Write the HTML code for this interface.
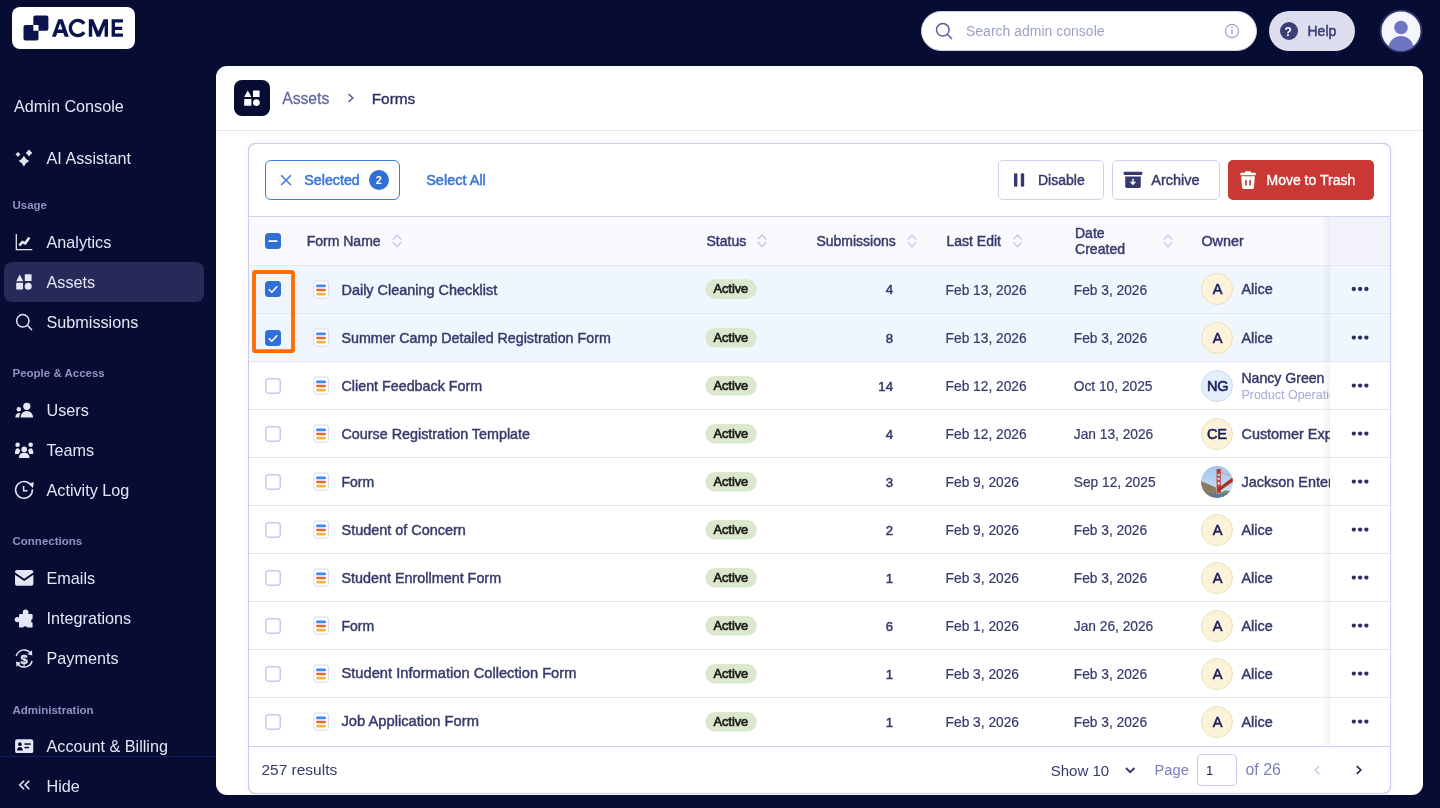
<!DOCTYPE html>
<html><head><meta charset="utf-8">
<style>
*{box-sizing:border-box;margin:0;padding:0}
html,body{width:1440px;height:808px;overflow:hidden;background:#060c32;font-family:"Liberation Sans",sans-serif}
.t{position:absolute;line-height:1;white-space:nowrap}
.a{position:absolute}
svg{position:absolute;overflow:visible}
</style></head><body><div id="root" style="position:absolute;left:0;top:0;width:1440px;height:808px;will-change:transform;background:#060c32">
<div class="a" style="left:12px;top:7px;width:123px;height:42px;background:#fff;border-radius:8px"></div><svg style="left:0;top:0" width="150" height="60">
<path d="M25.5 25h13v13.5a2 2 0 0 1-2 2h-11a2 2 0 0 1-2-2v-11.5a2 2 0 0 1 2-2z" fill="#0c1450"/>
<path d="M35.3 15.6h11.1a2 2 0 0 1 2 2v11.1a2 2 0 0 1-2 2h-13.1v-13.1a2 2 0 0 1 2-2z" fill="#0c1450"/>
<rect x="33.3" y="25" width="5.2" height="5.7" fill="#fff"/>
</svg><svg style="left:0;top:0" width="150" height="60" fill="#0c1450">
<path fill-rule="evenodd" d="M51.9 36.8 L58.3 19.3 H62.7 L68.8 36.8 H64.7 L63.4 32.9 H57.3 L55.9 36.8Z M57.9 29.6 H62.5 L60.2 23.2Z"/>
<path d="M84.1 23.7 A7.55 7.55 0 1 0 84.1 32.3" fill="none" stroke="#0c1450" stroke-width="3.3"/>
<path d="M88.8 36.8 V19.3 H93.2 L98.4 31.3 L103.6 19.3 H108 V36.8 H104.6 V25.6 L100.2 36.8 H96.6 L92.2 25.6 V36.8Z"/>
<path d="M111.6 19.3 H123 V22.5 H115 V26.7 H122.2 V29.9 H115 V33.6 H123 V36.8 H111.6Z"/>
</svg><div class="t" style="left:14px;top:98.29px;font-size:16.2px;font-weight:400;color:#e4e6f5;">Admin Console</div>
<div class="a" style="left:4px;top:262px;width:200px;height:40px;background:#272a58;border-radius:8px"></div><div class="t" style="left:12.5px;top:200.27px;font-size:11.5px;font-weight:700;color:#8e92c2;">Usage</div>
<div class="t" style="left:12.5px;top:368.47px;font-size:11.5px;font-weight:700;color:#8e92c2;">People &amp; Access</div>
<div class="t" style="left:12.5px;top:536.47px;font-size:11.5px;font-weight:700;color:#8e92c2;">Connections</div>
<div class="t" style="left:12.5px;top:704.57px;font-size:11.5px;font-weight:700;color:#8e92c2;">Administration</div>
<div class="t" style="left:46.5px;top:150.29px;font-size:16.2px;font-weight:400;color:#e4e6f5;">AI Assistant</div>
<div class="t" style="left:46.5px;top:234.29px;font-size:16.2px;font-weight:400;color:#e4e6f5;">Analytics</div>
<div class="t" style="left:46.5px;top:274.29px;font-size:16.2px;font-weight:400;color:#e4e6f5;">Assets</div>
<div class="t" style="left:46.5px;top:314.29px;font-size:16.2px;font-weight:400;color:#e4e6f5;">Submissions</div>
<div class="t" style="left:46.5px;top:402.29px;font-size:16.2px;font-weight:400;color:#e4e6f5;">Users</div>
<div class="t" style="left:46.5px;top:442.29px;font-size:16.2px;font-weight:400;color:#e4e6f5;">Teams</div>
<div class="t" style="left:46.5px;top:482.29px;font-size:16.2px;font-weight:400;color:#e4e6f5;">Activity Log</div>
<div class="t" style="left:46.5px;top:570.29px;font-size:16.2px;font-weight:400;color:#e4e6f5;">Emails</div>
<div class="t" style="left:46.5px;top:610.29px;font-size:16.2px;font-weight:400;color:#e4e6f5;">Integrations</div>
<div class="t" style="left:46.5px;top:650.29px;font-size:16.2px;font-weight:400;color:#e4e6f5;">Payments</div>
<div class="t" style="left:46.5px;top:738.29px;font-size:16.2px;font-weight:400;color:#e4e6f5;">Account &amp; Billing</div>
<svg style="left:0;top:0" width="216" height="808" fill="#e4e6f5" stroke="none">
<!-- sparkles -->
<path d="M23.9 155.79999999999998 Q25.49 159.51 29.2 161.1 Q25.49 162.69 23.9 166.4 Q22.31 162.69 18.599999999999998 161.1 Q22.31 159.51 23.9 155.79999999999998Z"/><path d="M29.0 149.6 Q30.428 151.572 32.4 153.0 Q30.428 154.428 29.0 156.4 Q27.572 154.428 25.6 153.0 Q27.572 151.572 29.0 149.6Z"/><path d="M18.0 151.70000000000002 Q18.988 153.312 20.6 154.3 Q18.988 155.288 18.0 156.9 Q17.012 155.288 15.4 154.3 Q17.012 153.312 18.0 151.70000000000002Z"/>
<!-- analytics -->
<g fill="none" stroke="#e4e6f5" stroke-width="1.3"><path d="M16.3 234v15.7h16"/></g>
<path d="M19.3 245.5 L22.5 242 L25.3 243.3 L29.3 237.5" fill="none" stroke="#e4e6f5" stroke-width="2.6" stroke-linecap="butt"/>
<!-- assets -->
<path d="M16.2 281.3 L19.8 274.6 L23.3 281.3Z"/>
<rect x="24.8" y="274.2" width="6.8" height="6.8" rx="0.6"/>
<rect x="16.2" y="282.8" width="6.8" height="6.8" rx="0.6"/>
<circle cx="28.2" cy="286.2" r="3.5"/>
<!-- search -->
<g fill="none" stroke="#e4e6f5" stroke-width="1.5"><circle cx="22.8" cy="320.8" r="6.2"/><path d="M27.3 325.3 L32 330"/></g>
<!-- users -->
<circle cx="26.8" cy="406.3" r="3.6"/>
<path d="M20.6 417.6 Q21 411 26.8 411 Q32.6 411 33 417.6Z"/>
<circle cx="18.8" cy="409.3" r="2.2"/>
<path d="M15.3 417.6 Q15.6 413.5 18.5 413 Q19.8 413 20.4 413.6 Q19.4 415 19.2 417.6Z"/>
<!-- teams -->
<circle cx="17.6" cy="444.7" r="2.3"/><circle cx="30.7" cy="444.7" r="2.3"/>
<circle cx="24.2" cy="449.4" r="2.8"/>
<path d="M14.9 454 Q15 448.3 17.6 448.3 Q19.8 448.3 20.3 450.8 Q19.2 452 19.1 454Z"/>
<path d="M33.4 454 Q33.3 448.3 30.7 448.3 Q28.5 448.3 28 450.8 Q29.1 452 29.2 454Z"/>
<path d="M18.8 458 Q19 452.8 24.2 452.8 Q29.4 452.8 29.6 458Z"/>
<!-- clock -->
<g fill="none" stroke="#e4e6f5" stroke-width="1.5"><path d="M32.4 489.3 A8.4 8.4 0 1 1 29.6 483.6"/><path d="M23.6 486 v4.8 h3.9"/></g>
<path d="M28.2 483.6 L33.9 482.2 L32.9 487.9Z"/>
<!-- mail -->
<path d="M15 572 Q15 570 17 570 H31.4 Q33.4 570 33.4 572 V572.6 L24.2 578.7 L15 572.6Z"/>
<path d="M15 574.8 L24.2 580.9 L33.4 574.8 V583.8 Q33.4 585.8 31.4 585.8 H17 Q15 585.8 15 583.8Z"/>
<!-- puzzle -->
<rect x="19" y="614" width="13.6" height="13.6" rx="1.2"/>
<circle cx="25.6" cy="612.4" r="2.9"/>
<circle cx="17.3" cy="619.6" r="2.6"/>
<circle cx="33.2" cy="621" r="2.1" fill="#060c32"/>
<circle cx="25.2" cy="628.4" r="2.1" fill="#060c32"/>
<!-- payments -->
<g fill="none" stroke="#e4e6f5" stroke-width="1.5"><path d="M16.3 656 A8.2 8.2 0 0 1 30.6 653"/><path d="M32.1 661 A8.2 8.2 0 0 1 17.8 664"/></g>
<path d="M31.9 650.3 L32.3 655.5 L27.5 654.3Z"/><path d="M16.5 666.7 L16.1 661.5 L20.9 662.7Z"/>
<text x="24.1" y="663.6" font-family="Liberation Sans" font-weight="700" font-size="13" text-anchor="middle" stroke="#e4e6f5" stroke-width="0.3">$</text>
<!-- card -->
<rect x="15.1" y="739.2" width="18.2" height="13.9" rx="2.2"/>
<circle cx="19.9" cy="744.2" r="1.9" fill="#060c32"/>
<path d="M17 750.6 Q17.2 747 19.9 747 Q22.6 747 22.8 750.6Z" fill="#060c32"/>
<rect x="24.5" y="743.3" width="6.3" height="1.5" fill="#060c32"/>
<rect x="24.5" y="746.8" width="4.5" height="1.5" fill="#060c32"/>
<!-- divider -->
<rect x="0" y="756" width="216" height="1" fill="#151b5c"/>
<!-- hide chevrons -->
<g fill="none" stroke="#e4e6f5" stroke-width="1.6"><path d="M24 780.8 L19.8 785 L24 789.2"/><path d="M29.3 780.8 L25.1 785 L29.3 789.2"/></g>
</svg><div class="t" style="left:46.5px;top:777.59px;font-size:16.2px;font-weight:400;color:#e4e6f5;">Hide</div>
<div class="a" style="left:921px;top:11px;width:336px;height:40px;background:#fff;border-radius:20px;border:1px solid #c9cdee"></div><svg style="left:0;top:0" width="1440" height="60">
<g fill="none" stroke="#5a609a" stroke-width="1.5"><circle cx="942.8" cy="29.8" r="6.3"/><path d="M947.3 34.3 L952 39"/></g>
<g fill="none" stroke="#9ca1c9" stroke-width="1.2"><circle cx="1232" cy="31" r="6.6"/></g>
<rect x="1231.3" y="29.5" width="1.4" height="4.6" fill="#9ca1c9"/><circle cx="1232" cy="27.4" r="0.85" fill="#9ca1c9"/>
</svg><div class="t" style="left:966px;top:24.05px;font-size:14px;font-weight:400;color:#9ca1c9;">Search admin console</div>
<div class="a" style="left:1269px;top:11px;width:86px;height:40px;background:#dcdef0;border-radius:20px"></div><svg style="left:0;top:0" width="1440" height="60"><circle cx="1289" cy="31" r="9" fill="#3b3f73"/></svg><div class="t" style="left:1284.6px;top:25.84px;font-size:12px;font-weight:700;color:#fff;">?</div>
<div class="t" style="left:1307.5px;top:23.65px;font-size:14px;font-weight:400;color:#3b3f73;-webkit-text-stroke:0.5px #3b3f73;">Help</div>
<svg style="left:0;top:0" width="1440" height="60">
<defs><clipPath id="av"><circle cx="1401" cy="31" r="20"/></clipPath></defs>
<circle cx="1401" cy="31" r="20.5" fill="#f4f6fe" stroke="#2e3266" stroke-width="2"/>
<g clip-path="url(#av)" fill="#6e75c4"><circle cx="1401" cy="27.5" r="6.8"/><ellipse cx="1401" cy="48" rx="12.3" ry="12"/></g>
</svg><div class="a" style="left:216px;top:66px;width:1207px;height:729px;background:#fff;border-radius:11px;overflow:hidden"></div><div class="a" style="left:216px;top:130px;width:1207px;height:1px;background:#e4e6f5"></div><div class="a" style="left:234px;top:80px;width:36px;height:36px;background:#060c32;border-radius:8px"></div><svg style="left:0;top:0" width="1440" height="140" fill="#fff">
<path d="M244.1 97 L247.8 90.4 L251.5 97Z"/>
<rect x="253" y="90.4" width="6.6" height="6.5" rx="0.5"/>
<rect x="244.2" y="99" width="7.2" height="6.7" rx="0.5"/>
<circle cx="256.4" cy="102.6" r="3.4"/>
<path d="M348.6 94 L352.8 98 L348.6 102" fill="none" stroke="#555b94" stroke-width="1.5"/>
</svg><div class="t" style="left:282.2px;top:90.91px;font-size:15.7px;font-weight:400;color:#6268a0;-webkit-text-stroke:0.3px #6268a0;">Assets</div>
<div class="t" style="left:371.7px;top:91.06px;font-size:15.4px;font-weight:400;color:#2b2f63;-webkit-text-stroke:0.35px #2b2f63;">Forms</div>
<div class="a" style="left:248px;top:143px;width:1143px;height:651px;border:1px solid #cacdeb;border-radius:8px;overflow:hidden;background:#fff;box-shadow:0 0 6px rgba(20,20,60,0.06)" id="card"></div><div class="a" style="left:265px;top:160px;width:135px;height:40px;border:1px solid #3a7bdc;border-radius:6px"></div><svg style="left:0;top:0" width="1440" height="220">
<path d="M281.2 175.3 L290.9 185 M290.9 175.3 L281.2 185" stroke="#3a78d8" stroke-width="1.5" fill="none"/>
<circle cx="379" cy="180" r="10" fill="#2f6fd6"/>
<!-- disable -->
<rect x="1014" y="173.3" width="3.4" height="13.4" rx="1.2" fill="#363a6b"/>
<rect x="1020.8" y="173.3" width="3.4" height="13.4" rx="1.2" fill="#363a6b"/>
<!-- archive -->
<rect x="1123.8" y="171.7" width="18.4" height="3.4" rx="0.6" fill="#363a6b"/>
<path d="M1125.2 176.6 H1140.8 V186.3 Q1140.8 188 1139.1 188 H1126.9 Q1125.2 188 1125.2 186.3Z" fill="#363a6b"/>
<path d="M1133 178.8 V183.6 M1130.6 181.6 L1133 184.2 L1135.4 181.6" stroke="#fff" stroke-width="1.4" fill="none"/>
</svg><div class="t" style="left:304.3px;top:173.04px;font-size:14.25px;font-weight:400;color:#3a78d8;-webkit-text-stroke:0.55px #3a78d8;">Selected</div>
<div class="t" style="left:375.8px;top:175.09px;font-size:11px;font-weight:700;color:#fff;">2</div>
<div class="t" style="left:426.2px;top:172.83px;font-size:14.5px;font-weight:400;color:#3a78d8;-webkit-text-stroke:0.55px #3a78d8;">Select All</div>
<div class="a" style="left:998px;top:160px;width:106px;height:40px;border:1px solid #cdd0ef;border-radius:5px"></div><div class="a" style="left:1112px;top:160px;width:108px;height:40px;border:1px solid #cdd0ef;border-radius:5px"></div><div class="t" style="left:1038px;top:173.45px;font-size:14px;font-weight:400;color:#363a6b;-webkit-text-stroke:0.45px #363a6b;">Disable</div>
<div class="t" style="left:1151.3px;top:173.03px;font-size:14.5px;font-weight:400;color:#363a6b;-webkit-text-stroke:0.45px #363a6b;">Archive</div>
<div class="a" style="left:1228px;top:160px;width:146px;height:40px;background:#c93832;border-radius:5px"></div><svg style="left:0;top:0" width="1440" height="220" fill="#fff">
<path d="M1245.5 171.2 H1250.5 Q1251 171.2 1251 172 V172.8 H1255.3 Q1255.8 172.8 1255.8 173.6 V175.2 H1240.4 V173.6 Q1240.4 172.8 1241 172.8 H1245 V172 Q1245 171.2 1245.5 171.2Z"/>
<path d="M1241.3 176.3 H1254.8 L1254 187.3 Q1253.9 189 1252.2 189 H1243.8 Q1242.1 189 1242 187.3Z"/>
<rect x="1245.2" y="180" width="1.6" height="5.5" fill="#c93832"/><rect x="1249.2" y="180" width="1.6" height="5.5" fill="#c93832"/>
</svg><div class="t" style="left:1266.5px;top:172.95px;font-size:14px;font-weight:400;color:#fff;-webkit-text-stroke:0.35px #fff;">Move to Trash</div>
<div class="a" style="left:249px;top:216px;width:1141px;height:1px;background:#cfd2f0"></div><div class="a" style="left:249px;top:217px;width:1141px;height:48px;background:#f9f9fe"></div><div class="a" style="left:1330px;top:217px;width:60px;height:48px;background:#f3f3fb"></div><svg style="left:0;top:0" width="1440" height="280"><rect x="265" y="233" width="16" height="16" rx="3.5" fill="#2f6fd6"/><rect x="268.5" y="240.2" width="9" height="1.8" rx="0.6" fill="#fff"/><path d="M392.8 239.5 L397 235 L401.2 239.5 M392.8 242.3 L397 246.8 L401.2 242.3" fill="none" stroke="#c5c8ec" stroke-width="1.4"/><path d="M757.8 239.5 L762 235 L766.2 239.5 M757.8 242.3 L762 246.8 L766.2 242.3" fill="none" stroke="#c5c8ec" stroke-width="1.4"/><path d="M907.8 239.5 L912 235 L916.2 239.5 M907.8 242.3 L912 246.8 L916.2 242.3" fill="none" stroke="#c5c8ec" stroke-width="1.4"/><path d="M1013.3 239.5 L1017.5 235 L1021.7 239.5 M1013.3 242.3 L1017.5 246.8 L1021.7 242.3" fill="none" stroke="#c5c8ec" stroke-width="1.4"/><path d="M1163.8 239.5 L1168 235 L1172.2 239.5 M1163.8 242.3 L1168 246.8 L1172.2 242.3" fill="none" stroke="#c5c8ec" stroke-width="1.4"/></svg><div class="t" style="left:306.7px;top:234.15px;font-size:14px;font-weight:400;color:#363a6b;-webkit-text-stroke:0.45px #363a6b;">Form Name</div>
<div class="t" style="left:706.5px;top:234.35px;font-size:14px;font-weight:400;color:#363a6b;-webkit-text-stroke:0.45px #363a6b;">Status</div>
<div class="t" style="left:816.4px;top:234.15px;font-size:14px;font-weight:400;color:#363a6b;-webkit-text-stroke:0.45px #363a6b;">Submissions</div>
<div class="t" style="left:946.5px;top:234.15px;font-size:14px;font-weight:400;color:#363a6b;-webkit-text-stroke:0.45px #363a6b;">Last Edit</div>
<div class="t" style="left:1075px;top:226.15px;font-size:14px;font-weight:400;color:#363a6b;-webkit-text-stroke:0.45px #363a6b;">Date</div>
<div class="t" style="left:1075px;top:241.56px;font-size:14.1px;font-weight:400;color:#363a6b;-webkit-text-stroke:0.45px #363a6b;">Created</div>
<div class="t" style="left:1201.4px;top:233.81px;font-size:14.4px;font-weight:400;color:#363a6b;-webkit-text-stroke:0.45px #363a6b;">Owner</div>
<div class="a" style="left:249px;top:265px;width:1141px;height:1px;background:#e3e5f5"></div><div class="a" style="left:249px;top:266px;width:1141px;height:47px;background:#eff6fe"></div><svg style="left:0;top:265px" width="1440" height="48"><rect x="265" y="16" width="16" height="16" rx="3.5" fill="#2f6fd6"/><path d="M268.8 24.2 L271.8 27.2 L277.3 21.3" fill="none" stroke="#fff" stroke-width="1.6"/><rect x="313.9" y="16" width="14.5" height="17.2" rx="2.5" fill="#fff" stroke="#d5d7f0" stroke-width="1"/><rect x="316" y="19.6" width="10" height="2.6" rx="1.3" fill="#3a8ef0"/><rect x="316" y="23.7" width="10" height="2.6" rx="1.3" fill="#e8692c"/><rect x="316" y="27.7" width="10" height="2.7" rx="1.3" fill="#f0b84a"/><rect x="705.3" y="14.3" width="51.5" height="19.6" rx="9.8" fill="#dce7cf"/></svg><div class="t" style="left:341.5px;top:282.57px;font-size:14.45px;font-weight:400;color:#363a6b;-webkit-text-stroke:0.45px #363a6b;">Daily Cleaning Checklist</div>
<div class="t" style="left:713.4px;top:283.36px;font-size:12.8px;font-weight:400;color:#1a1f1a;-webkit-text-stroke:0.7px #1a1f1a;">Active</div>
<div class="t" style="left:893px;top:283.43px;font-size:13.2px;font-weight:400;color:#363a6b;-webkit-text-stroke:0.5px #363a6b;transform:translateX(-100%)">4</div>
<div class="t" style="left:945.6px;top:283.66px;font-size:13.75px;font-weight:400;color:#363a6b;-webkit-text-stroke:0.2px #363a6b;">Feb 13, 2026</div>
<div class="t" style="left:1073.75px;top:283.66px;font-size:13.75px;font-weight:400;color:#363a6b;-webkit-text-stroke:0.2px #363a6b;">Feb 3, 2026</div>
<div class="a" style="left:1195px;top:266px;width:135px;height:47px;overflow:hidden"><div class="a" style="left:6.4px;top:7px;width:32px;height:32px;border-radius:50%;background:#fdf3da;border:1px solid #ecdfb9;"></div><div class="t" style="left:17.7px;top:15.93px;font-size:14.5px;font-weight:400;color:#1a1f5e;-webkit-text-stroke:0.6px #1a1f5e;">A</div>
<div class="t" style="left:46.5px;top:15.81px;font-size:14.4px;font-weight:400;color:#363a6b;-webkit-text-stroke:0.45px #363a6b;">Alice</div>
</div><div class="a" style="left:1322px;top:266px;width:8px;height:47px;background:linear-gradient(to right,rgba(0,0,40,0),rgba(0,0,40,0.05))"></div><svg style="left:0;top:265px" width="1440" height="48" fill="#2b2f63"><circle cx="1353.8" cy="24" r="2.15"/><circle cx="1360.1" cy="24" r="2.15"/><circle cx="1366.4" cy="24" r="2.15"/></svg><div class="a" style="left:249px;top:313px;width:1141px;height:1px;background:#e3e5f5"></div><div class="a" style="left:249px;top:314px;width:1141px;height:47px;background:#eff6fe"></div><svg style="left:0;top:313px" width="1440" height="48"><rect x="265" y="17" width="16" height="16" rx="3.5" fill="#2f6fd6"/><path d="M268.8 25.2 L271.8 28.2 L277.3 22.3" fill="none" stroke="#fff" stroke-width="1.6"/><rect x="313.9" y="16" width="14.5" height="17.2" rx="2.5" fill="#fff" stroke="#d5d7f0" stroke-width="1"/><rect x="316" y="19.6" width="10" height="2.6" rx="1.3" fill="#3a8ef0"/><rect x="316" y="23.7" width="10" height="2.6" rx="1.3" fill="#e8692c"/><rect x="316" y="27.7" width="10" height="2.7" rx="1.3" fill="#f0b84a"/><rect x="705.3" y="15" width="51.5" height="19.6" rx="9.8" fill="#dce7cf"/></svg><div class="t" style="left:341.5px;top:330.74px;font-size:14.25px;font-weight:400;color:#363a6b;-webkit-text-stroke:0.45px #363a6b;">Summer Camp Detailed Registration Form</div>
<div class="t" style="left:713.4px;top:331.96px;font-size:12.8px;font-weight:400;color:#1a1f1a;-webkit-text-stroke:0.7px #1a1f1a;">Active</div>
<div class="t" style="left:893px;top:331.93px;font-size:13.2px;font-weight:400;color:#363a6b;-webkit-text-stroke:0.5px #363a6b;transform:translateX(-100%)">8</div>
<div class="t" style="left:945.6px;top:331.66px;font-size:13.75px;font-weight:400;color:#363a6b;-webkit-text-stroke:0.2px #363a6b;">Feb 13, 2026</div>
<div class="t" style="left:1073.75px;top:331.66px;font-size:13.75px;font-weight:400;color:#363a6b;-webkit-text-stroke:0.2px #363a6b;">Feb 3, 2026</div>
<div class="a" style="left:1195px;top:314px;width:135px;height:47px;overflow:hidden"><div class="a" style="left:6.4px;top:8px;width:32px;height:32px;border-radius:50%;background:#fdf3da;border:1px solid #ecdfb9;"></div><div class="t" style="left:17.7px;top:16.73px;font-size:14.5px;font-weight:400;color:#1a1f5e;-webkit-text-stroke:0.6px #1a1f5e;">A</div>
<div class="t" style="left:46.5px;top:16.81px;font-size:14.4px;font-weight:400;color:#363a6b;-webkit-text-stroke:0.45px #363a6b;">Alice</div>
</div><div class="a" style="left:1322px;top:314px;width:8px;height:47px;background:linear-gradient(to right,rgba(0,0,40,0),rgba(0,0,40,0.05))"></div><svg style="left:0;top:313px" width="1440" height="48" fill="#2b2f63"><circle cx="1353.8" cy="24.6" r="2.15"/><circle cx="1360.1" cy="24.6" r="2.15"/><circle cx="1366.4" cy="24.6" r="2.15"/></svg><div class="a" style="left:249px;top:361px;width:1141px;height:1px;background:#e3e5f5"></div><div class="a" style="left:249px;top:362px;width:1141px;height:47px;background:#fff"></div><svg style="left:0;top:361px" width="1440" height="48"><rect x="265.75" y="17.75" width="14.5" height="14.5" rx="3" fill="#fff" stroke="#c8cbeb" stroke-width="1.5"/><rect x="313.9" y="16" width="14.5" height="17.2" rx="2.5" fill="#fff" stroke="#d5d7f0" stroke-width="1"/><rect x="316" y="19.6" width="10" height="2.6" rx="1.3" fill="#3a8ef0"/><rect x="316" y="23.7" width="10" height="2.6" rx="1.3" fill="#e8692c"/><rect x="316" y="27.7" width="10" height="2.7" rx="1.3" fill="#f0b84a"/><rect x="705.3" y="15" width="51.5" height="19.6" rx="9.8" fill="#dce7cf"/></svg><div class="t" style="left:341.5px;top:378.70px;font-size:14.3px;font-weight:400;color:#363a6b;-webkit-text-stroke:0.45px #363a6b;">Client Feedback Form</div>
<div class="t" style="left:713.4px;top:379.96px;font-size:12.8px;font-weight:400;color:#1a1f1a;-webkit-text-stroke:0.7px #1a1f1a;">Active</div>
<div class="t" style="left:893px;top:379.93px;font-size:13.2px;font-weight:400;color:#363a6b;-webkit-text-stroke:0.5px #363a6b;transform:translateX(-100%)">14</div>
<div class="t" style="left:945.6px;top:379.66px;font-size:13.75px;font-weight:400;color:#363a6b;-webkit-text-stroke:0.2px #363a6b;">Feb 12, 2026</div>
<div class="t" style="left:1073.75px;top:379.66px;font-size:13.75px;font-weight:400;color:#363a6b;-webkit-text-stroke:0.2px #363a6b;">Oct 10, 2025</div>
<div class="a" style="left:1195px;top:362px;width:135px;height:47px;overflow:hidden"><div class="a" style="left:6.4px;top:8px;width:32px;height:32px;border-radius:50%;background:#e3effb;border:1px solid #c9dcf0;"></div><div class="t" style="left:11.899999999999999px;top:16.73px;font-size:14.5px;font-weight:400;color:#1a1f5e;-webkit-text-stroke:0.6px #1a1f5e;">NG</div>
<div class="t" style="left:46.4px;top:9.26px;font-size:14.1px;font-weight:400;color:#363a6b;-webkit-text-stroke:0.45px #363a6b;">Nancy Green</div>
<div class="t" style="left:46.4px;top:27.42px;font-size:12.5px;font-weight:400;color:#a6aad3;">Product Operations</div>
</div><div class="a" style="left:1322px;top:362px;width:8px;height:47px;background:linear-gradient(to right,rgba(0,0,40,0),rgba(0,0,40,0.05))"></div><svg style="left:0;top:361px" width="1440" height="48" fill="#2b2f63"><circle cx="1353.8" cy="24.6" r="2.15"/><circle cx="1360.1" cy="24.6" r="2.15"/><circle cx="1366.4" cy="24.6" r="2.15"/></svg><div class="a" style="left:249px;top:409px;width:1141px;height:1px;background:#e3e5f5"></div><div class="a" style="left:249px;top:410px;width:1141px;height:47px;background:#fff"></div><svg style="left:0;top:409px" width="1440" height="48"><rect x="265.75" y="17.75" width="14.5" height="14.5" rx="3" fill="#fff" stroke="#c8cbeb" stroke-width="1.5"/><rect x="313.9" y="16" width="14.5" height="17.2" rx="2.5" fill="#fff" stroke="#d5d7f0" stroke-width="1"/><rect x="316" y="19.6" width="10" height="2.6" rx="1.3" fill="#3a8ef0"/><rect x="316" y="23.7" width="10" height="2.6" rx="1.3" fill="#e8692c"/><rect x="316" y="27.7" width="10" height="2.7" rx="1.3" fill="#f0b84a"/><rect x="705.3" y="15" width="51.5" height="19.6" rx="9.8" fill="#dce7cf"/></svg><div class="t" style="left:341.5px;top:426.67px;font-size:14.33px;font-weight:400;color:#363a6b;-webkit-text-stroke:0.45px #363a6b;">Course Registration Template</div>
<div class="t" style="left:713.4px;top:427.96px;font-size:12.8px;font-weight:400;color:#1a1f1a;-webkit-text-stroke:0.7px #1a1f1a;">Active</div>
<div class="t" style="left:893px;top:427.93px;font-size:13.2px;font-weight:400;color:#363a6b;-webkit-text-stroke:0.5px #363a6b;transform:translateX(-100%)">4</div>
<div class="t" style="left:945.6px;top:427.66px;font-size:13.75px;font-weight:400;color:#363a6b;-webkit-text-stroke:0.2px #363a6b;">Feb 12, 2026</div>
<div class="t" style="left:1073.75px;top:427.66px;font-size:13.75px;font-weight:400;color:#363a6b;-webkit-text-stroke:0.2px #363a6b;">Jan 13, 2026</div>
<div class="a" style="left:1195px;top:410px;width:135px;height:47px;overflow:hidden"><div class="a" style="left:6.4px;top:8px;width:32px;height:32px;border-radius:50%;background:#fdf3da;border:1px solid #ecdfb9;"></div><div class="t" style="left:11.899999999999999px;top:16.73px;font-size:14.5px;font-weight:400;color:#1a1f5e;-webkit-text-stroke:0.6px #1a1f5e;">CE</div>
<div class="t" style="left:46.5px;top:16.81px;font-size:14.4px;font-weight:400;color:#363a6b;-webkit-text-stroke:0.45px #363a6b;">Customer Experience</div>
</div><div class="a" style="left:1322px;top:410px;width:8px;height:47px;background:linear-gradient(to right,rgba(0,0,40,0),rgba(0,0,40,0.05))"></div><svg style="left:0;top:409px" width="1440" height="48" fill="#2b2f63"><circle cx="1353.8" cy="24.6" r="2.15"/><circle cx="1360.1" cy="24.6" r="2.15"/><circle cx="1366.4" cy="24.6" r="2.15"/></svg><div class="a" style="left:249px;top:457px;width:1141px;height:1px;background:#e3e5f5"></div><div class="a" style="left:249px;top:458px;width:1141px;height:47px;background:#fff"></div><svg style="left:0;top:457px" width="1440" height="48"><rect x="265.75" y="17.75" width="14.5" height="14.5" rx="3" fill="#fff" stroke="#c8cbeb" stroke-width="1.5"/><rect x="313.9" y="16" width="14.5" height="17.2" rx="2.5" fill="#fff" stroke="#d5d7f0" stroke-width="1"/><rect x="316" y="19.6" width="10" height="2.6" rx="1.3" fill="#3a8ef0"/><rect x="316" y="23.7" width="10" height="2.6" rx="1.3" fill="#e8692c"/><rect x="316" y="27.7" width="10" height="2.7" rx="1.3" fill="#f0b84a"/><rect x="705.3" y="15" width="51.5" height="19.6" rx="9.8" fill="#dce7cf"/></svg><div class="t" style="left:341.5px;top:474.95px;font-size:14.0px;font-weight:400;color:#363a6b;-webkit-text-stroke:0.45px #363a6b;">Form</div>
<div class="t" style="left:713.4px;top:475.96px;font-size:12.8px;font-weight:400;color:#1a1f1a;-webkit-text-stroke:0.7px #1a1f1a;">Active</div>
<div class="t" style="left:893px;top:475.93px;font-size:13.2px;font-weight:400;color:#363a6b;-webkit-text-stroke:0.5px #363a6b;transform:translateX(-100%)">3</div>
<div class="t" style="left:945.6px;top:475.66px;font-size:13.75px;font-weight:400;color:#363a6b;-webkit-text-stroke:0.2px #363a6b;">Feb 9, 2026</div>
<div class="t" style="left:1073.75px;top:475.66px;font-size:13.75px;font-weight:400;color:#363a6b;-webkit-text-stroke:0.2px #363a6b;">Sep 12, 2025</div>
<div class="a" style="left:1195px;top:458px;width:135px;height:47px;overflow:hidden"><svg style="left:6.2px;top:8px" width="32" height="32"><defs><clipPath id="ph"><circle cx="16" cy="16" r="15.9"/></clipPath><linearGradient id="sky" x1="0" y1="0" x2="0" y2="1"><stop offset="0" stop-color="#a3c6ec"/><stop offset="1" stop-color="#d3e4f4"/></linearGradient></defs><g clip-path="url(#ph)"><rect width="32" height="32" fill="url(#sky)"/><path d="M0 15.3 L6 17.5 L14.8 21.5 L15.5 28 L0 28Z" fill="#8d7862"/><path d="M19 27 L24 24.5 L32 25 L32 29 L19 29Z" fill="#7f8a7a"/><rect y="27.5" width="32" height="5" fill="#5d7894"/><rect x="15.6" y="3" width="4.2" height="24" fill="#c03c28"/><rect x="16.6" y="7.6" width="2.2" height="2.4" fill="#b9d3ee"/><rect x="16.6" y="11.6" width="2.2" height="2.6" fill="#c3d9f0"/><rect x="16.6" y="16" width="2.2" height="2.8" fill="#c9ddf1"/><path d="M17 22.5 L32 11 L32 15.5 L18 25.5Z" fill="#a8321f"/><path d="M19.8 6 Q25 10 32 9" stroke="#d86a5a" stroke-width="0.5" fill="none"/></g></svg><div class="t" style="left:46.5px;top:16.81px;font-size:14.4px;font-weight:400;color:#363a6b;-webkit-text-stroke:0.45px #363a6b;">Jackson Enterprises</div>
</div><div class="a" style="left:1322px;top:458px;width:8px;height:47px;background:linear-gradient(to right,rgba(0,0,40,0),rgba(0,0,40,0.05))"></div><svg style="left:0;top:457px" width="1440" height="48" fill="#2b2f63"><circle cx="1353.8" cy="24.6" r="2.15"/><circle cx="1360.1" cy="24.6" r="2.15"/><circle cx="1366.4" cy="24.6" r="2.15"/></svg><div class="a" style="left:249px;top:505px;width:1141px;height:1px;background:#e3e5f5"></div><div class="a" style="left:249px;top:506px;width:1141px;height:47px;background:#fff"></div><svg style="left:0;top:505px" width="1440" height="48"><rect x="265.75" y="17.75" width="14.5" height="14.5" rx="3" fill="#fff" stroke="#c8cbeb" stroke-width="1.5"/><rect x="313.9" y="16" width="14.5" height="17.2" rx="2.5" fill="#fff" stroke="#d5d7f0" stroke-width="1"/><rect x="316" y="19.6" width="10" height="2.6" rx="1.3" fill="#3a8ef0"/><rect x="316" y="23.7" width="10" height="2.6" rx="1.3" fill="#e8692c"/><rect x="316" y="27.7" width="10" height="2.7" rx="1.3" fill="#f0b84a"/><rect x="705.3" y="15" width="51.5" height="19.6" rx="9.8" fill="#dce7cf"/></svg><div class="t" style="left:341.5px;top:522.57px;font-size:14.45px;font-weight:400;color:#363a6b;-webkit-text-stroke:0.45px #363a6b;">Student of Concern</div>
<div class="t" style="left:713.4px;top:523.96px;font-size:12.8px;font-weight:400;color:#1a1f1a;-webkit-text-stroke:0.7px #1a1f1a;">Active</div>
<div class="t" style="left:893px;top:523.93px;font-size:13.2px;font-weight:400;color:#363a6b;-webkit-text-stroke:0.5px #363a6b;transform:translateX(-100%)">2</div>
<div class="t" style="left:945.6px;top:523.66px;font-size:13.75px;font-weight:400;color:#363a6b;-webkit-text-stroke:0.2px #363a6b;">Feb 9, 2026</div>
<div class="t" style="left:1073.75px;top:523.66px;font-size:13.75px;font-weight:400;color:#363a6b;-webkit-text-stroke:0.2px #363a6b;">Feb 3, 2026</div>
<div class="a" style="left:1195px;top:506px;width:135px;height:47px;overflow:hidden"><div class="a" style="left:6.4px;top:8px;width:32px;height:32px;border-radius:50%;background:#fdf3da;border:1px solid #ecdfb9;"></div><div class="t" style="left:17.7px;top:16.73px;font-size:14.5px;font-weight:400;color:#1a1f5e;-webkit-text-stroke:0.6px #1a1f5e;">A</div>
<div class="t" style="left:46.5px;top:16.81px;font-size:14.4px;font-weight:400;color:#363a6b;-webkit-text-stroke:0.45px #363a6b;">Alice</div>
</div><div class="a" style="left:1322px;top:506px;width:8px;height:47px;background:linear-gradient(to right,rgba(0,0,40,0),rgba(0,0,40,0.05))"></div><svg style="left:0;top:505px" width="1440" height="48" fill="#2b2f63"><circle cx="1353.8" cy="24.6" r="2.15"/><circle cx="1360.1" cy="24.6" r="2.15"/><circle cx="1366.4" cy="24.6" r="2.15"/></svg><div class="a" style="left:249px;top:553px;width:1141px;height:1px;background:#e3e5f5"></div><div class="a" style="left:249px;top:554px;width:1141px;height:47px;background:#fff"></div><svg style="left:0;top:553px" width="1440" height="48"><rect x="265.75" y="17.75" width="14.5" height="14.5" rx="3" fill="#fff" stroke="#c8cbeb" stroke-width="1.5"/><rect x="313.9" y="16" width="14.5" height="17.2" rx="2.5" fill="#fff" stroke="#d5d7f0" stroke-width="1"/><rect x="316" y="19.6" width="10" height="2.6" rx="1.3" fill="#3a8ef0"/><rect x="316" y="23.7" width="10" height="2.6" rx="1.3" fill="#e8692c"/><rect x="316" y="27.7" width="10" height="2.7" rx="1.3" fill="#f0b84a"/><rect x="705.3" y="15" width="51.5" height="19.6" rx="9.8" fill="#dce7cf"/></svg><div class="t" style="left:341.5px;top:570.64px;font-size:14.36px;font-weight:400;color:#363a6b;-webkit-text-stroke:0.45px #363a6b;">Student Enrollment Form</div>
<div class="t" style="left:713.4px;top:571.96px;font-size:12.8px;font-weight:400;color:#1a1f1a;-webkit-text-stroke:0.7px #1a1f1a;">Active</div>
<div class="t" style="left:893px;top:571.93px;font-size:13.2px;font-weight:400;color:#363a6b;-webkit-text-stroke:0.5px #363a6b;transform:translateX(-100%)">1</div>
<div class="t" style="left:945.6px;top:571.66px;font-size:13.75px;font-weight:400;color:#363a6b;-webkit-text-stroke:0.2px #363a6b;">Feb 3, 2026</div>
<div class="t" style="left:1073.75px;top:571.66px;font-size:13.75px;font-weight:400;color:#363a6b;-webkit-text-stroke:0.2px #363a6b;">Feb 3, 2026</div>
<div class="a" style="left:1195px;top:554px;width:135px;height:47px;overflow:hidden"><div class="a" style="left:6.4px;top:8px;width:32px;height:32px;border-radius:50%;background:#fdf3da;border:1px solid #ecdfb9;"></div><div class="t" style="left:17.7px;top:16.73px;font-size:14.5px;font-weight:400;color:#1a1f5e;-webkit-text-stroke:0.6px #1a1f5e;">A</div>
<div class="t" style="left:46.5px;top:16.81px;font-size:14.4px;font-weight:400;color:#363a6b;-webkit-text-stroke:0.45px #363a6b;">Alice</div>
</div><div class="a" style="left:1322px;top:554px;width:8px;height:47px;background:linear-gradient(to right,rgba(0,0,40,0),rgba(0,0,40,0.05))"></div><svg style="left:0;top:553px" width="1440" height="48" fill="#2b2f63"><circle cx="1353.8" cy="24.6" r="2.15"/><circle cx="1360.1" cy="24.6" r="2.15"/><circle cx="1366.4" cy="24.6" r="2.15"/></svg><div class="a" style="left:249px;top:601px;width:1141px;height:1px;background:#e3e5f5"></div><div class="a" style="left:249px;top:602px;width:1141px;height:47px;background:#fff"></div><svg style="left:0;top:601px" width="1440" height="48"><rect x="265.75" y="17.75" width="14.5" height="14.5" rx="3" fill="#fff" stroke="#c8cbeb" stroke-width="1.5"/><rect x="313.9" y="16" width="14.5" height="17.2" rx="2.5" fill="#fff" stroke="#d5d7f0" stroke-width="1"/><rect x="316" y="19.6" width="10" height="2.6" rx="1.3" fill="#3a8ef0"/><rect x="316" y="23.7" width="10" height="2.6" rx="1.3" fill="#e8692c"/><rect x="316" y="27.7" width="10" height="2.7" rx="1.3" fill="#f0b84a"/><rect x="705.3" y="15" width="51.5" height="19.6" rx="9.8" fill="#dce7cf"/></svg><div class="t" style="left:341.5px;top:618.95px;font-size:14.0px;font-weight:400;color:#363a6b;-webkit-text-stroke:0.45px #363a6b;">Form</div>
<div class="t" style="left:713.4px;top:619.96px;font-size:12.8px;font-weight:400;color:#1a1f1a;-webkit-text-stroke:0.7px #1a1f1a;">Active</div>
<div class="t" style="left:893px;top:619.93px;font-size:13.2px;font-weight:400;color:#363a6b;-webkit-text-stroke:0.5px #363a6b;transform:translateX(-100%)">6</div>
<div class="t" style="left:945.6px;top:619.66px;font-size:13.75px;font-weight:400;color:#363a6b;-webkit-text-stroke:0.2px #363a6b;">Feb 1, 2026</div>
<div class="t" style="left:1073.75px;top:619.66px;font-size:13.75px;font-weight:400;color:#363a6b;-webkit-text-stroke:0.2px #363a6b;">Jan 26, 2026</div>
<div class="a" style="left:1195px;top:602px;width:135px;height:47px;overflow:hidden"><div class="a" style="left:6.4px;top:8px;width:32px;height:32px;border-radius:50%;background:#fdf3da;border:1px solid #ecdfb9;"></div><div class="t" style="left:17.7px;top:16.73px;font-size:14.5px;font-weight:400;color:#1a1f5e;-webkit-text-stroke:0.6px #1a1f5e;">A</div>
<div class="t" style="left:46.5px;top:16.81px;font-size:14.4px;font-weight:400;color:#363a6b;-webkit-text-stroke:0.45px #363a6b;">Alice</div>
</div><div class="a" style="left:1322px;top:602px;width:8px;height:47px;background:linear-gradient(to right,rgba(0,0,40,0),rgba(0,0,40,0.05))"></div><svg style="left:0;top:601px" width="1440" height="48" fill="#2b2f63"><circle cx="1353.8" cy="24.6" r="2.15"/><circle cx="1360.1" cy="24.6" r="2.15"/><circle cx="1366.4" cy="24.6" r="2.15"/></svg><div class="a" style="left:249px;top:649px;width:1141px;height:1px;background:#e3e5f5"></div><div class="a" style="left:249px;top:650px;width:1141px;height:47px;background:#fff"></div><svg style="left:0;top:649px" width="1440" height="48"><rect x="265.75" y="17.75" width="14.5" height="14.5" rx="3" fill="#fff" stroke="#c8cbeb" stroke-width="1.5"/><rect x="313.9" y="16" width="14.5" height="17.2" rx="2.5" fill="#fff" stroke="#d5d7f0" stroke-width="1"/><rect x="316" y="19.6" width="10" height="2.6" rx="1.3" fill="#3a8ef0"/><rect x="316" y="23.7" width="10" height="2.6" rx="1.3" fill="#e8692c"/><rect x="316" y="27.7" width="10" height="2.7" rx="1.3" fill="#f0b84a"/><rect x="705.3" y="15" width="51.5" height="19.6" rx="9.8" fill="#dce7cf"/></svg><div class="t" style="left:341.5px;top:666.37px;font-size:14.68px;font-weight:400;color:#363a6b;-webkit-text-stroke:0.45px #363a6b;">Student Information Collection Form</div>
<div class="t" style="left:713.4px;top:667.96px;font-size:12.8px;font-weight:400;color:#1a1f1a;-webkit-text-stroke:0.7px #1a1f1a;">Active</div>
<div class="t" style="left:893px;top:667.93px;font-size:13.2px;font-weight:400;color:#363a6b;-webkit-text-stroke:0.5px #363a6b;transform:translateX(-100%)">1</div>
<div class="t" style="left:945.6px;top:667.66px;font-size:13.75px;font-weight:400;color:#363a6b;-webkit-text-stroke:0.2px #363a6b;">Feb 3, 2026</div>
<div class="t" style="left:1073.75px;top:667.66px;font-size:13.75px;font-weight:400;color:#363a6b;-webkit-text-stroke:0.2px #363a6b;">Feb 3, 2026</div>
<div class="a" style="left:1195px;top:650px;width:135px;height:47px;overflow:hidden"><div class="a" style="left:6.4px;top:8px;width:32px;height:32px;border-radius:50%;background:#fdf3da;border:1px solid #ecdfb9;"></div><div class="t" style="left:17.7px;top:16.73px;font-size:14.5px;font-weight:400;color:#1a1f5e;-webkit-text-stroke:0.6px #1a1f5e;">A</div>
<div class="t" style="left:46.5px;top:16.81px;font-size:14.4px;font-weight:400;color:#363a6b;-webkit-text-stroke:0.45px #363a6b;">Alice</div>
</div><div class="a" style="left:1322px;top:650px;width:8px;height:47px;background:linear-gradient(to right,rgba(0,0,40,0),rgba(0,0,40,0.05))"></div><svg style="left:0;top:649px" width="1440" height="48" fill="#2b2f63"><circle cx="1353.8" cy="24.6" r="2.15"/><circle cx="1360.1" cy="24.6" r="2.15"/><circle cx="1366.4" cy="24.6" r="2.15"/></svg><div class="a" style="left:249px;top:697px;width:1141px;height:1px;background:#e3e5f5"></div><div class="a" style="left:249px;top:698px;width:1141px;height:47px;background:#fff"></div><svg style="left:0;top:697px" width="1440" height="48"><rect x="265.75" y="17.75" width="14.5" height="14.5" rx="3" fill="#fff" stroke="#c8cbeb" stroke-width="1.5"/><rect x="313.9" y="16" width="14.5" height="17.2" rx="2.5" fill="#fff" stroke="#d5d7f0" stroke-width="1"/><rect x="316" y="19.6" width="10" height="2.6" rx="1.3" fill="#3a8ef0"/><rect x="316" y="23.7" width="10" height="2.6" rx="1.3" fill="#e8692c"/><rect x="316" y="27.7" width="10" height="2.7" rx="1.3" fill="#f0b84a"/><rect x="705.3" y="15" width="51.5" height="19.6" rx="9.8" fill="#dce7cf"/></svg><div class="t" style="left:341.5px;top:714.34px;font-size:14.72px;font-weight:400;color:#363a6b;-webkit-text-stroke:0.45px #363a6b;">Job Application Form</div>
<div class="t" style="left:713.4px;top:715.96px;font-size:12.8px;font-weight:400;color:#1a1f1a;-webkit-text-stroke:0.7px #1a1f1a;">Active</div>
<div class="t" style="left:893px;top:715.93px;font-size:13.2px;font-weight:400;color:#363a6b;-webkit-text-stroke:0.5px #363a6b;transform:translateX(-100%)">1</div>
<div class="t" style="left:945.6px;top:715.66px;font-size:13.75px;font-weight:400;color:#363a6b;-webkit-text-stroke:0.2px #363a6b;">Feb 3, 2026</div>
<div class="t" style="left:1073.75px;top:715.66px;font-size:13.75px;font-weight:400;color:#363a6b;-webkit-text-stroke:0.2px #363a6b;">Feb 3, 2026</div>
<div class="a" style="left:1195px;top:698px;width:135px;height:47px;overflow:hidden"><div class="a" style="left:6.4px;top:8px;width:32px;height:32px;border-radius:50%;background:#fdf3da;border:1px solid #ecdfb9;"></div><div class="t" style="left:17.7px;top:16.73px;font-size:14.5px;font-weight:400;color:#1a1f5e;-webkit-text-stroke:0.6px #1a1f5e;">A</div>
<div class="t" style="left:46.5px;top:16.81px;font-size:14.4px;font-weight:400;color:#363a6b;-webkit-text-stroke:0.45px #363a6b;">Alice</div>
</div><div class="a" style="left:1322px;top:698px;width:8px;height:47px;background:linear-gradient(to right,rgba(0,0,40,0),rgba(0,0,40,0.05))"></div><svg style="left:0;top:697px" width="1440" height="48" fill="#2b2f63"><circle cx="1353.8" cy="24.6" r="2.15"/><circle cx="1360.1" cy="24.6" r="2.15"/><circle cx="1366.4" cy="24.6" r="2.15"/></svg><div class="a" style="left:1322px;top:217px;width:8px;height:48px;background:linear-gradient(to right,rgba(0,0,40,0),rgba(0,0,40,0.05))"></div><div class="a" style="left:249px;top:746px;width:1141px;height:1px;background:#cfd2f0"></div><div class="t" style="left:261.4px;top:762.48px;font-size:15.5px;font-weight:400;color:#363a6b;">257 results</div>
<div class="t" style="left:1050.75px;top:763.05px;font-size:15px;font-weight:400;color:#363a6b;">Show 10</div>
<div class="t" style="left:1154.5px;top:763.31px;font-size:14.7px;font-weight:400;color:#7b80b5;">Page</div>
<div class="a" style="left:1197px;top:754px;width:40px;height:31.5px;border:1px solid #c5c9ee;border-radius:4px"></div><div class="t" style="left:1206px;top:763.50px;font-size:13px;font-weight:400;color:#1e2250;">1</div>
<div class="t" style="left:1245.5px;top:762.29px;font-size:15.9px;font-weight:400;color:#7b80b5;">of 26</div>
<svg style="left:0;top:0" width="1440" height="808">
<path d="M1126 768 L1130.2 772.2 L1134.4 768" fill="none" stroke="#363a6b" stroke-width="1.8"/>
<path d="M1319.3 766 L1315.3 770 L1319.3 774" fill="none" stroke="#c5c8e6" stroke-width="1.5"/>
<path d="M1356.8 766.2 L1360.8 770 L1356.8 773.8" fill="none" stroke="#1e2250" stroke-width="1.6"/>
<!-- orange highlight -->
<rect x="254" y="272" width="39" height="79.2" rx="1.5" fill="none" stroke="#ff6b00" stroke-width="3.8"/>
</svg><div class="a" style="left:248px;top:143px;width:1143px;height:651px;border:1px solid #cacdeb;border-radius:7px;pointer-events:none"></div></div></body></html>
